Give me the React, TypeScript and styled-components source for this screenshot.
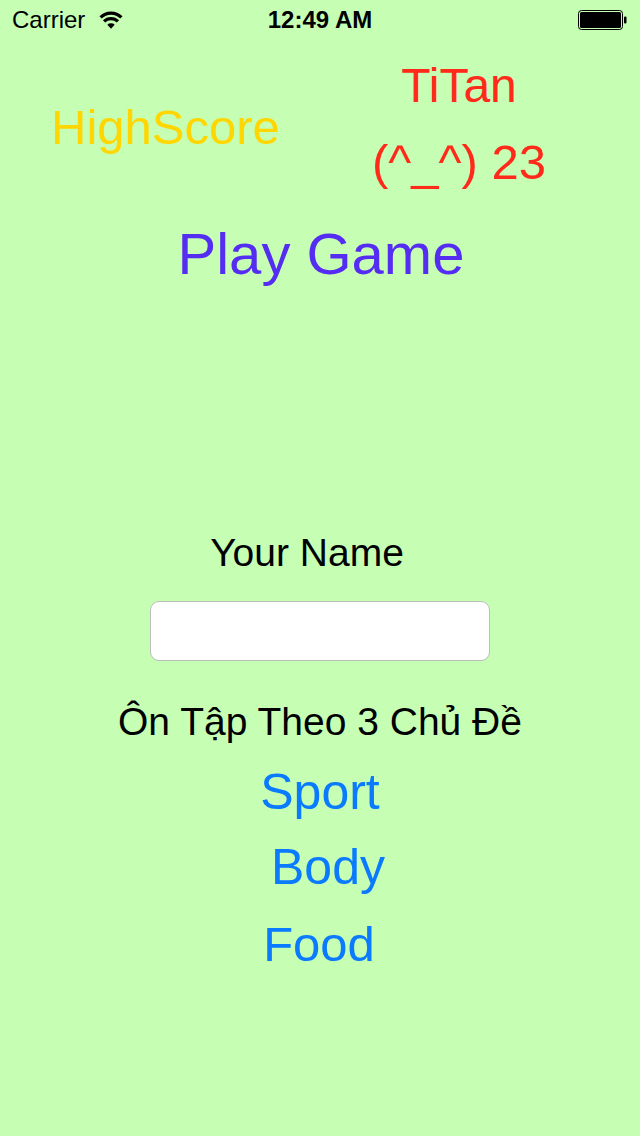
import React from "react";
import styled, { createGlobalStyle } from "styled-components";

const Global = createGlobalStyle`
  html, body { margin: 0; padding: 0; }
  body {
    background: #c6feb4;
    font-family: "Liberation Sans", Arial, "Noto Sans", sans-serif;
  }
`;

const Screen = styled.div`
  width: 640px;
  min-height: 1136px;
  background: #c6feb4;
  display: flex;
  flex-direction: column;
`;

const StatusBar = styled.div`
  height: 40px;
  display: grid;
  grid-template-columns: 1fr auto 1fr;
  align-items: center;
  padding: 0 12px;
  font-size: 24px;
  color: #000;
`;

const StatusLeft = styled.div`
  display: flex;
  align-items: center;
  gap: 13px;
`;

const Time = styled.div`
  font-weight: bold;
`;

const StatusRight = styled.div`
  display: flex;
  justify-content: flex-end;
  align-items: center;
`;

const Header = styled.div`
  display: flex;
  align-items: flex-start;
`;

const Label = styled.div<{ $size: number; $color: string }>`
  font-size: ${(p) => p.$size}px;
  line-height: 1;
  color: ${(p) => p.$color};
  white-space: nowrap;
`;

const HighScore = styled(Label)`
  margin-left: 51px;
  margin-top: 63px;
`;

const ScoreCol = styled.div`
  margin-left: auto;
  margin-right: 94px;
  margin-top: 22px;
  display: flex;
  flex-direction: column;
  align-items: center;
  gap: 28px;
`;

const Stack = styled.div`
  display: flex;
  flex-direction: column;
  align-items: center;
`;

const Centered = styled(Label)<{ $top: number; $shift?: number }>`
  margin-top: ${(p) => p.$top}px;
  ${(p) =>
    p.$shift
      ? p.$shift > 0
        ? `margin-left: ${p.$shift * 2}px;`
        : `margin-right: ${-p.$shift * 2}px;`
      : ""}
`;

const NameField = styled.input`
  margin-top: 29px;
  width: 340px;
  height: 60px;
  box-sizing: border-box;
  border: 1px solid #bdbdbd;
  border-radius: 9px;
  background: #fff;
  outline: none;
  font-size: 28px;
  padding: 0 12px;
  font-family: inherit;
`;

const Wifi = () => (
  <svg width="26" height="20" viewBox="0 0 24 18">
    <path d="M12 17 L8.6 13.4 A5 5 0 0 1 15.4 13.4 Z" fill="#000" />
    <path
      d="M5.6 10.3 A9 9 0 0 1 18.4 10.3"
      stroke="#000"
      strokeWidth="3"
      fill="none"
    />
    <path
      d="M2.4 6.6 A13.5 13.5 0 0 1 21.6 6.6"
      stroke="#000"
      strokeWidth="3"
      fill="none"
    />
  </svg>
);

const Battery = () => (
  <svg width="50" height="22" viewBox="0 0 50 22">
    <rect x="0.5" y="1.5" width="44" height="19" rx="3" fill="none" stroke="#000" strokeWidth="1" />
    <rect x="2" y="3" width="41" height="16" rx="1.5" fill="#000" />
    <rect x="46" y="7.5" width="2.5" height="7" rx="1" fill="#000" />
  </svg>
);

export default function App() {
  return (
    <>
      <Global />
      <Screen>
        <StatusBar>
          <StatusLeft>
            <span>Carrier</span>
            <Wifi />
          </StatusLeft>
          <Time>12:49 AM</Time>
          <StatusRight>
            <Battery />
          </StatusRight>
        </StatusBar>
        <Header>
          <HighScore $size={49} $color="#ffd600">
            HighScore
          </HighScore>
          <ScoreCol>
            <Label $size={48} $color="#ff2a1a">
              TiTan
            </Label>
            <Label $size={49} $color="#ff2a1a">
              (^_^) 23
            </Label>
          </ScoreCol>
        </Header>
        <Stack>
          <Centered $top={38} $size={58} $color="#552cf2" $shift={1}>
            Play Game
          </Centered>
          <Centered $top={250} $size={39} $color="#000" $shift={-13}>
            Your Name
          </Centered>
          <NameField type="text" />
          <Centered $top={41} $size={39} $color="#000">
            Ôn Tập Theo 3 Chủ Đề
          </Centered>
          <Centered $top={26} $size={50} $color="#0a7aff">
            Sport
          </Centered>
          <Centered $top={25} $size={50} $color="#0a7aff" $shift={8}>
            Body
          </Centered>
          <Centered $top={28} $size={49} $color="#0a7aff" $shift={-1}>
            Food
          </Centered>
        </Stack>
      </Screen>
    </>
  );
}
